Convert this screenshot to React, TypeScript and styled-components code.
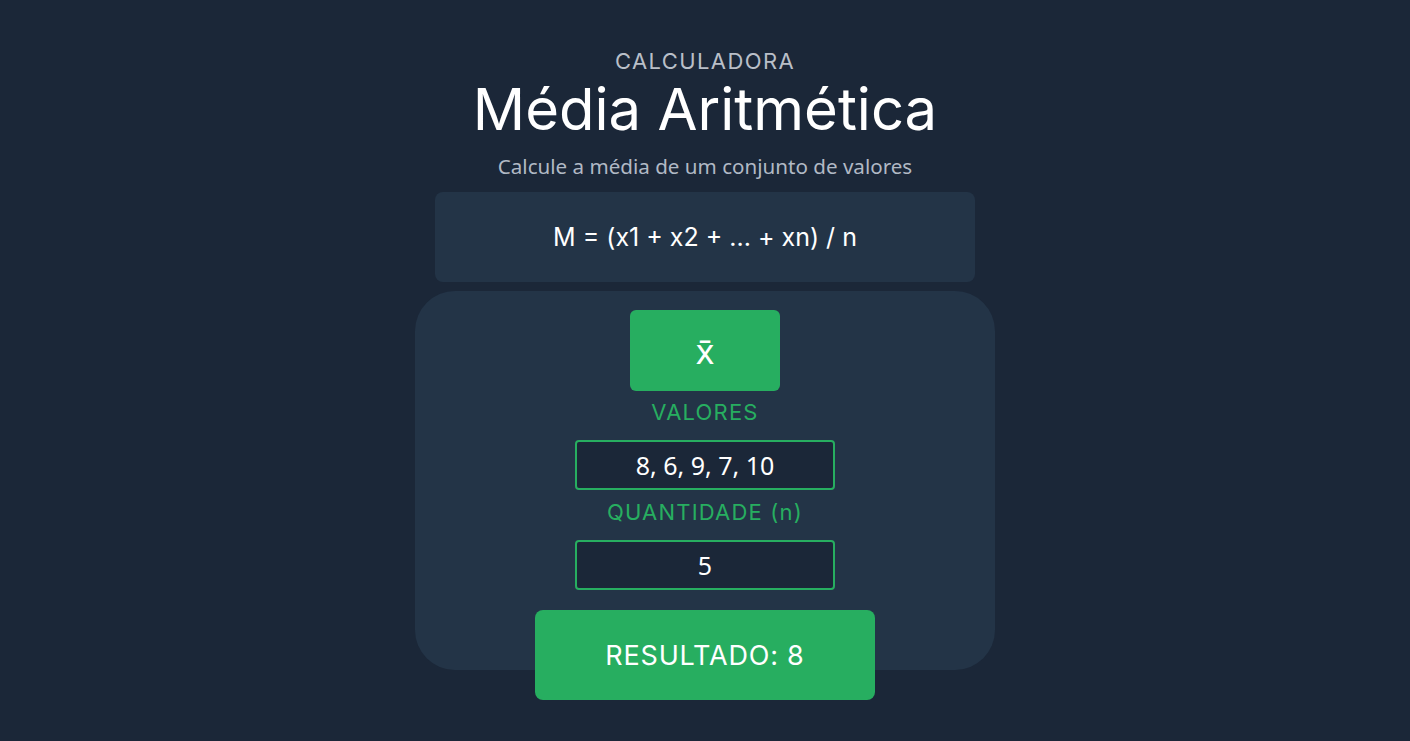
import React from "react"
import styled, { createGlobalStyle } from "styled-components"

const GlobalStyle = createGlobalStyle`
  html, body {
    margin: 0;
    padding: 0;
    background: #1b2738;
  }
  * {
    box-sizing: border-box;
  }
`

const Page = styled.div`
  min-height: 741px;
  display: flex;
  flex-direction: column;
  align-items: center;
  padding-top: 46px;
  font-family: Inter, "Liberation Sans", sans-serif;
  color: #ffffff;
`

const Eyebrow = styled.div`
  font-size: 22px;
  line-height: 30px;
  color: #b9bfc8;
  letter-spacing: 1.4px;
`

const Title = styled.h1`
  margin: 0;
  font-size: 58px;
  font-weight: 400;
  line-height: 66px;
  color: #ffffff;
`

const Subtitle = styled.p`
  margin: 10px 0 0;
  font-family: "Noto Sans", "Open Sans", sans-serif;
  font-size: 20.6px;
  line-height: 28px;
  color: #b1b9c5;
`

const FormulaBox = styled.div`
  margin-top: 12px;
  width: 540px;
  height: 90px;
  flex-shrink: 0;
  border-radius: 8px;
  background: #233447;
  display: flex;
  align-items: center;
  justify-content: center;
  font-size: 25px;
  color: #ffffff;
`

const Card = styled.div`
  margin-top: 9px;
  width: 580px;
  height: 379px;
  border-radius: 40px;
  background: #233447;
  display: flex;
  flex-direction: column;
  align-items: center;
  padding-top: 19px;
`

const SymbolButton = styled.div`
  width: 150px;
  height: 81px;
  flex-shrink: 0;
  border-radius: 6px;
  background: #27ae60;
  display: flex;
  align-items: center;
  justify-content: center;
  font-family: "Noto Sans", sans-serif;
  font-size: 35px;
  color: #ffffff;
`

const Label = styled.div`
  margin-top: ${props => props.$top}px;
  flex-shrink: 0;
  font-size: 22px;
  line-height: 26px;
  letter-spacing: 1.2px;
  color: #27ae60;
`

const Field = styled.div`
  margin-top: 15px;
  width: 260px;
  height: 50px;
  flex-shrink: 0;
  border: 2px solid #27ae60;
  border-radius: 4px;
  background: #1b2738;
  display: flex;
  align-items: center;
  justify-content: center;
  font-family: "Noto Sans", "Open Sans", sans-serif;
  font-size: 25px;
  color: #ffffff;
`

const ResultButton = styled.div`
  margin-top: 20px;
  width: 340px;
  height: 90px;
  flex-shrink: 0;
  border-radius: 8px;
  background: #27ae60;
  display: flex;
  align-items: center;
  justify-content: center;
  font-size: 27px;
  letter-spacing: 0.8px;
  color: #ffffff;
`

export default function App() {
  return (
    <>
      <GlobalStyle />
      <Page>
        <Eyebrow>CALCULADORA</Eyebrow>
        <Title>Média Aritmética</Title>
        <Subtitle>Calcule a média de um conjunto de valores</Subtitle>
        <FormulaBox>M = (x1 + x2 + ... + xn) / n</FormulaBox>
        <Card>
          <SymbolButton>x̄</SymbolButton>
          <Label $top={8}>VALORES</Label>
          <Field>8, 6, 9, 7, 10</Field>
          <Label $top={9}>QUANTIDADE (n)</Label>
          <Field>5</Field>
          <ResultButton>RESULTADO: 8</ResultButton>
        </Card>
      </Page>
    </>
  )
}
